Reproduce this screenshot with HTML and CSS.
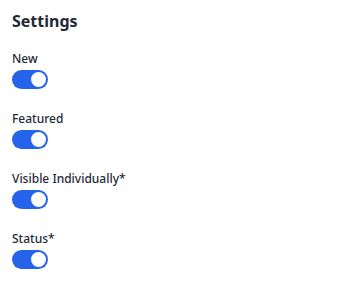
FILE: index.html
```html
<!DOCTYPE html>
<html lang="en">
<head>
    <meta charset="UTF-8">
    <meta name="viewport" content="width=device-width, initial-scale=1.0">
    <title>Settings</title>
    <link rel="stylesheet" href="styles.css">
</head>
<body>
    <div class="settings">
        <h2>Settings</h2>
        <div class="field">
            <label>New</label>
            <span class="toggle on"></span>
        </div>
        <div class="field">
            <label>Featured</label>
            <span class="toggle on"></span>
        </div>
        <div class="field">
            <label>Visible Individually*</label>
            <span class="toggle on"></span>
        </div>
        <div class="field">
            <label>Status*</label>
            <span class="toggle on"></span>
        </div>
    </div>
</body>
</html>
```

FILE: styles.css
```css
body {
    margin: 0;
    padding: 0;
    background-color: #ffffff;
    font-family: "Noto Sans", "Open Sans", sans-serif;
    color: #1f2937;
}
.settings {
    padding: 11px 12px;
    display: flex;
    flex-direction: column;
}
.settings h2 {
    margin: 0 0 20px 0;
    font-size: 16px;
    line-height: 20px;
    font-weight: 700;
}
.field {
    display: flex;
    flex-direction: column;
    align-items: flex-start;
    gap: 3px;
    margin-bottom: 22px;
}
.field label {
    font-size: 12px;
    line-height: 16px;
    font-weight: 500;
}
.toggle {
    width: 36px;
    height: 19px;
    border-radius: 10px;
    background-color: #d1d5db;
    position: relative;
}
.toggle.on {
    background-color: #2563eb;
}
.toggle::after {
    content: "";
    position: absolute;
    top: 2px;
    left: 2px;
    width: 15px;
    height: 15px;
    border-radius: 50%;
    background-color: #ffffff;
}
.toggle.on::after {
    left: 19px;
}
```
